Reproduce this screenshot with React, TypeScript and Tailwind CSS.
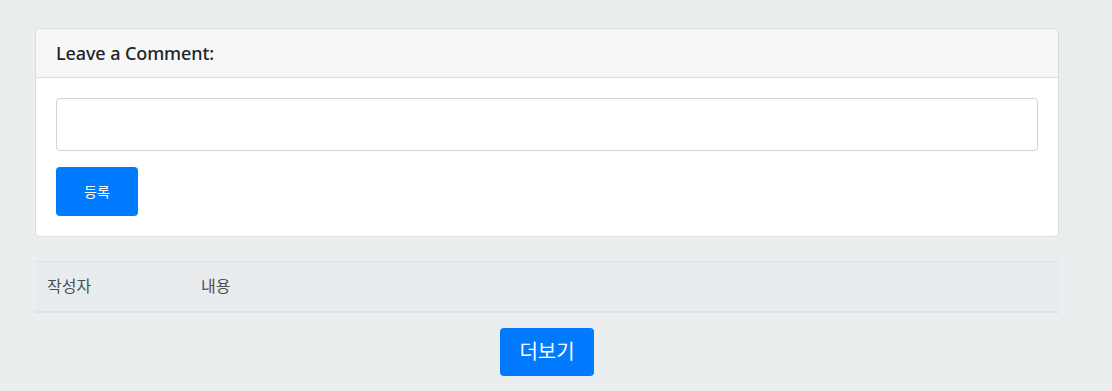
export default function App() {
  return (
    <div className="min-h-[391px] w-full bg-[#ebeeef] pt-[28px] font-['Noto_Sans','Noto_Sans_CJK_KR',sans-serif] text-[#212529]">
      <div className="ml-[35px] w-[1024px]">
        {/* Comment card */}
        <div className="rounded-[4px] border border-[#dcdcdc] bg-white">
          <div className="h-[49px] border-b border-[#dcdcdc] bg-[#f7f7f7] px-[20px] flex items-center rounded-t-[4px]">
            <h5 className="text-[18px] font-medium leading-none tracking-[-0.1px]">Leave a Comment:</h5>
          </div>
          <div className="p-[20px]">
            <textarea className="block h-[53px] w-full resize-none rounded-[4px] border border-[#ced4da] bg-white" />
            <button className="mt-[16px] h-[49px] w-[82px] rounded-[4px] bg-[#007bff] text-[14px] text-white">
              등록
            </button>
          </div>
        </div>

        {/* Comment list */}
        <table className="mt-[24px] w-full border-collapse">
          <thead>
            <tr className="h-[50px] border-t border-b-2 border-t-[#dee2e6] border-b-[#dee2e6] bg-[#e9ecef] text-left text-[16px] font-normal text-[#495057]">
              <th className="w-[154px] pl-[12px] font-normal">작성자</th>
              <th className="pl-[12px] font-normal">내용</th>
            </tr>
          </thead>
        </table>

        <div className="mt-[15px] flex justify-center">
          <button className="h-[48px] w-[94px] rounded-[4px] bg-[#007bff] text-[20px] text-white">
            더보기
          </button>
        </div>
      </div>
    </div>
  );
}
